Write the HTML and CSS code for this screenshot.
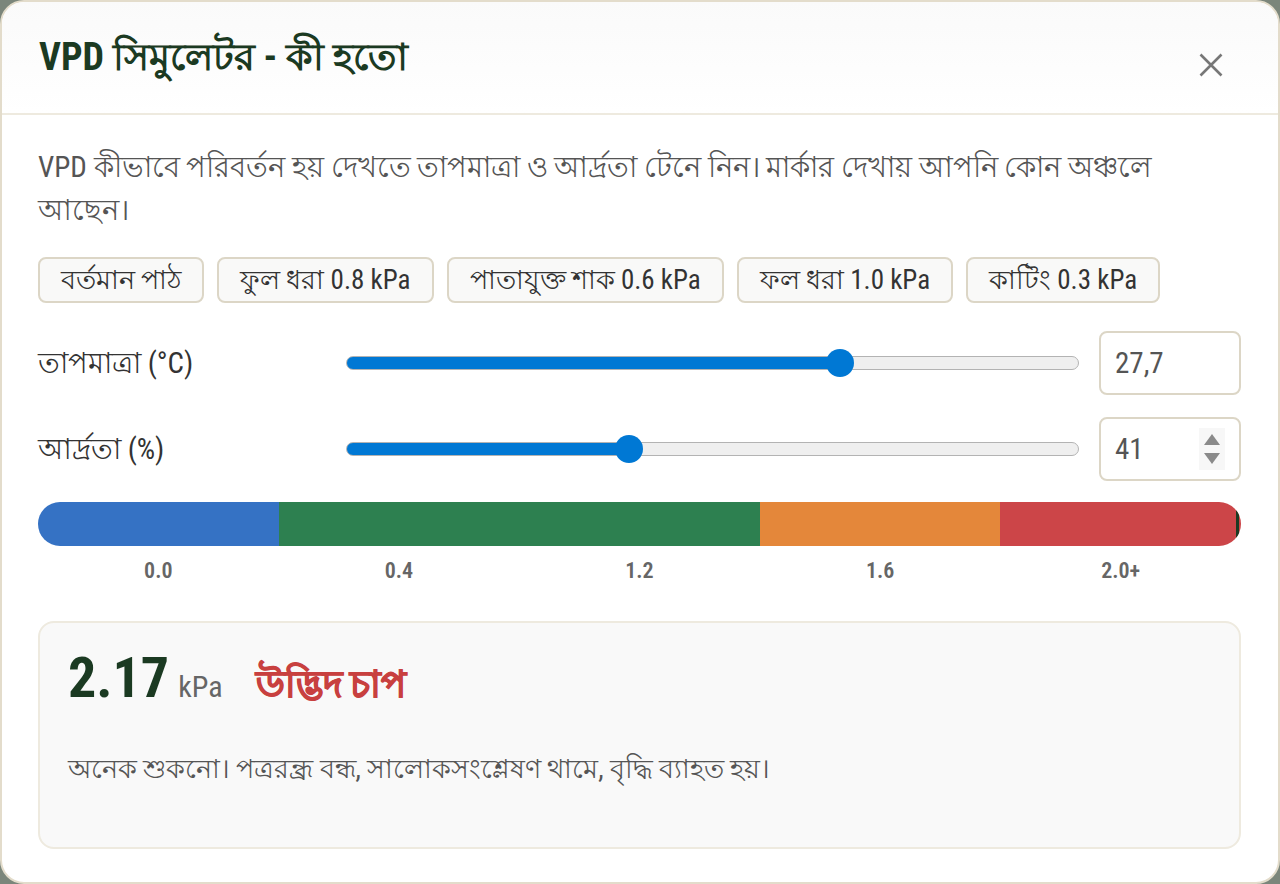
FILE: index.html
```html
<!DOCTYPE html>
<html lang="bn">
<head>
  <meta charset="UTF-8">
  <title>VPD সিমুলেটর</title>
  <link rel="stylesheet" href="styles.css">
</head>
<body>

  <div class="backdrop">
    <section class="modal" role="dialog" aria-labelledby="vpd-title">

      <header class="modal-head">
        <h2 id="vpd-title">VPD সিমুলেটর - কী হতো</h2>
        <button type="button" class="btn-close" aria-label="বন্ধ করুন">
          <svg width="24" height="24" viewBox="0 0 24 24" aria-hidden="true">
            <path d="M1.5 1.5 L22.5 22.5 M22.5 1.5 L1.5 22.5" stroke="#777" stroke-width="2.6"/>
          </svg>
        </button>
      </header>

      <div class="modal-body">
        <p class="intro">VPD কীভাবে পরিবর্তন হয় দেখতে তাপমাত্রা ও আর্দ্রতা টেনে নিন। মার্কার দেখায় আপনি কোন অঞ্চলে আছেন।</p>

        <div class="presets">
          <button type="button" class="preset">বর্তমান পাঠ</button>
          <button type="button" class="preset">ফুল ধরা 0.8 kPa</button>
          <button type="button" class="preset">পাতাযুক্ত শাক 0.6 kPa</button>
          <button type="button" class="preset">ফল ধরা 1.0 kPa</button>
          <button type="button" class="preset">কাটিং 0.3 kPa</button>
        </div>

        <div class="control-row">
          <label for="temp-range">তাপমাত্রা (°C)</label>
          <input id="temp-range" class="slider" type="range" min="10" max="36" step="0.1" value="27.7" style="--fill: 67.5%">
          <div class="num-box">
            <input class="num" type="text" value="27,7" aria-label="তাপমাত্রা">
          </div>
        </div>

        <div class="control-row">
          <label for="hum-range">আর্দ্রতা (%)</label>
          <input id="hum-range" class="slider" type="range" min="20" max="75" step="1" value="41" style="--fill: 38.5%">
          <div class="num-box">
            <input class="num" type="text" value="41" aria-label="আর্দ্রতা">
            <span class="spin" aria-hidden="true">
              <i class="spin-up"></i>
              <i class="spin-down"></i>
            </span>
          </div>
        </div>

        <div class="scale">
          <div class="scale-bar">
            <span class="seg seg-low"></span>
            <span class="seg seg-ok"></span>
            <span class="seg seg-high"></span>
            <span class="seg seg-stress"></span>
            <span class="marker" style="left: 99.8%"></span>
          </div>
          <div class="scale-labels">
            <span>0.0</span>
            <span>0.4</span>
            <span>1.2</span>
            <span>1.6</span>
            <span>2.0+</span>
          </div>
        </div>

        <div class="result">
          <div class="result-head">
            <span class="result-value">2.17</span>
            <span class="result-unit">kPa</span>
            <span class="result-zone">উদ্ভিদ চাপ</span>
          </div>
          <p class="result-text">অনেক শুকনো। পত্ররন্ধ্র বন্ধ, সালোকসংশ্লেষণ থামে, বৃদ্ধি ব্যাহত হয়।</p>
        </div>
      </div>

    </section>
  </div>

</body>
</html>
```

FILE: styles.css
```css
html, body {
  margin: 0;
  height: 100%;
}
body {
  background: #7b867b;
  font-family: "Roboto Condensed", sans-serif;
  color: #333;
}
.backdrop {
  height: 100%;
  display: flex;
}
.modal {
  flex: 1;
  display: flex;
  flex-direction: column;
  border: 2px solid #e3dccb;
  border-radius: 24px;
  background: #fff;
  overflow: hidden;
}
.modal-head {
  display: flex;
  align-items: center;
  justify-content: space-between;
  height: 111px;
  padding: 0 55px 0 37px;
  border-bottom: 2px solid #eeeadf;
  background: linear-gradient(#fafafa, #fff);
}
.modal-head h2 {
  margin: 0 0 2px;
  font-size: 38px;
  line-height: 46px;
  font-weight: 700;
  color: #1b3a22;
}
.btn-close {
  border: none;
  background: none;
  padding: 0;
  cursor: pointer;
  display: flex;
  margin-top: 14px;
}
.modal-body {
  padding: 31px 37px 32px 36px;
}
.intro {
  margin: 0;
  font-size: 29px;
  line-height: 43px;
  color: #555;
}
.presets {
  display: flex;
  gap: 13px;
  margin-top: 25px;
}
.preset {
  height: 46px;
  padding: 0 21px;
  border: 2px solid #dcd6c6;
  border-radius: 8px;
  background: #f9f9f8;
  font-family: inherit;
  font-size: 27px;
  line-height: 40px;
  color: #333;
  cursor: pointer;
}
.control-row {
  display: grid;
  grid-template-columns: 288px 1fr 142px;
  column-gap: 20px;
  align-items: center;
  margin-top: 22px;
}
.presets + .control-row {
  margin-top: 28px;
}
.control-row label {
  font-size: 29px;
  line-height: 40px;
  color: #333;
}
.slider {
  -webkit-appearance: none;
  appearance: none;
  width: 100%;
  height: 30px;
  margin: 0;
  background: transparent;
}
.slider::-webkit-slider-runnable-track {
  height: 14px;
  border: 1px solid #b3b3b3;
  border-radius: 8px;
  background: linear-gradient(to right, #0078d4 var(--fill), #efefef var(--fill));
}
.slider::-webkit-slider-thumb {
  -webkit-appearance: none;
  width: 28px;
  height: 28px;
  margin-top: -8px;
  border: none;
  border-radius: 50%;
  background: #0078d4;
}
.num-box {
  position: relative;
}
.num {
  box-sizing: border-box;
  width: 142px;
  height: 64px;
  padding: 0 14px;
  border: 2px solid #dcd6c6;
  border-radius: 8px;
  font-family: inherit;
  font-size: 29px;
  color: #555;
  background: #fff;
}
.spin {
  position: absolute;
  top: 11px;
  right: 16px;
  width: 26px;
  height: 42px;
  background: #f7f7f7;
}
.spin i {
  position: absolute;
  left: 5px;
  width: 0;
  height: 0;
  border-left: 8px solid transparent;
  border-right: 8px solid transparent;
}
.spin-up {
  top: 6px;
  border-bottom: 11px solid #8a8a8a;
}
.spin-down {
  bottom: 6px;
  border-top: 11px solid #8a8a8a;
}
.scale {
  margin-top: 21px;
}
.scale-bar {
  position: relative;
  display: flex;
  height: 44px;
  border-radius: 22px;
  overflow: hidden;
}
.seg {
  flex: 1;
}
.seg-low { background: #3572c4; }
.seg-ok { flex: 2; background: #2d8050; }
.seg-high { background: #e4873a; }
.seg-stress { background: #cc4548; }
.marker {
  position: absolute;
  top: 0;
  bottom: 0;
  width: 3px;
  margin-left: -3px;
  background: #1b3a22;
}
.scale-labels {
  display: flex;
  margin-top: 12px;
}
.scale-labels span {
  flex: 1;
  text-align: center;
  font-size: 22px;
  line-height: 26px;
  font-weight: 600;
  color: #666;
}
.result {
  margin-top: 37px;
  padding: 17px 28px 58px;
  border: 2px solid #eeeadf;
  border-radius: 16px;
  background: #f9f9f9;
}
.result-head {
  display: flex;
  align-items: baseline;
  line-height: 76px;
}
.result-value {
  font-size: 56px;
  font-weight: 700;
  color: #1b3a22;
}
.result-unit {
  margin-left: 9px;
  font-size: 30px;
  color: #666;
}
.result-zone {
  margin-left: 33px;
  font-size: 37px;
  font-weight: 700;
  color: #c8403f;
  -webkit-text-stroke: 1px #c8403f;
}
.result-text {
  margin: 24px 0 0;
  font-size: 27px;
  line-height: 40px;
  color: #555;
}
```
